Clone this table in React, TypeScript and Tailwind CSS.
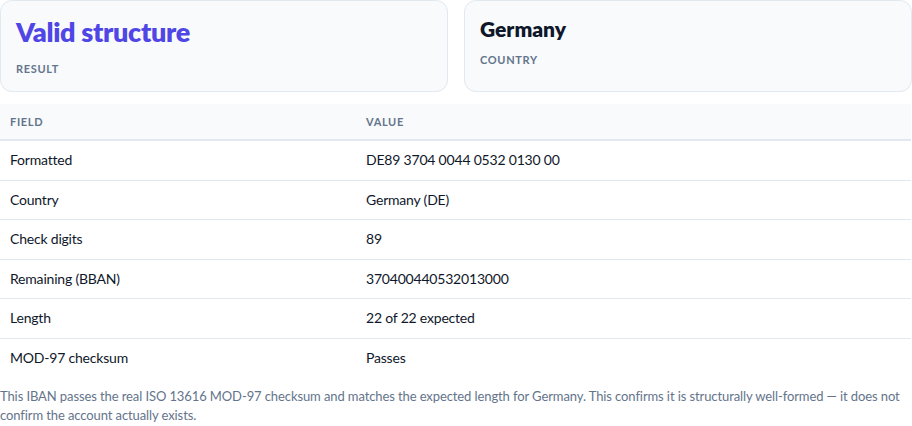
const rows: [string, string][] = [
  ["Formatted", "DE89 3704 0044 0532 0130 00"],
  ["Country", "Germany (DE)"],
  ["Check digits", "89"],
  ["Remaining (BBAN)", "370400440532013000"],
  ["Length", "22 of 22 expected"],
  ["MOD-97 checksum", "Passes"],
];

export default function App() {
  return (
    <div className="w-[912px] bg-white font-['Lato','Noto_Sans',sans-serif] text-[#0f172a]">
      <div className="grid grid-cols-2 gap-4">
        <div className="rounded-xl border border-[#e2e8f0] bg-[#f8fafc] px-[15px] pt-[14px] pb-[14px]">
          <div className="text-[27px] font-extrabold leading-[34px] tracking-[-0.3px] text-[#4f46e5]">
            Valid structure
          </div>
          <div className="mt-3 text-[11px] font-bold leading-4 tracking-[0.06em] text-[#64748b]">RESULT</div>
        </div>
        <div className="rounded-xl border border-[#e2e8f0] bg-[#f8fafc] px-[15px] pt-[14px] pb-[14px]">
          <div className="text-[21px] font-extrabold leading-7">Germany</div>
          <div className="mt-[9px] text-[11px] font-bold leading-4 tracking-[0.06em] text-[#64748b]">COUNTRY</div>
        </div>
      </div>

      <table className="mt-3 w-[911px] border-collapse text-left text-[14px]">
        <thead>
          <tr className="border-b-2 border-[#e2e8f0] bg-[#f8fafc]">
            <th className="w-[356px] px-2.5 py-[9.5px] text-[11px] font-bold leading-4 tracking-[0.06em] text-[#64748b]">
              FIELD
            </th>
            <th className="px-2.5 py-[9.5px] text-[11px] font-bold leading-4 tracking-[0.06em] text-[#64748b]">
              VALUE
            </th>
          </tr>
        </thead>
        <tbody>
          {rows.map(([field, value], i) => (
            <tr key={field} className={i < rows.length - 1 ? "border-b border-[#e2e8f0]" : ""}>
              <td className="px-2.5 py-[10px] leading-[18.5px] tracking-[-0.2px]">{field}</td>
              <td className="px-2.5 py-[10px] leading-[18.5px] tracking-[-0.2px]">{value}</td>
            </tr>
          ))}
        </tbody>
      </table>

      <p className="mt-[10px] pr-2 text-[13px] leading-[19px] tracking-[-0.1px] text-[#64748b]">
        This IBAN passes the real ISO 13616 MOD-97 checksum and matches the expected length for Germany. This confirms it
        is structurally well-formed — it does not confirm the account actually exists.
      </p>
    </div>
  );
}
